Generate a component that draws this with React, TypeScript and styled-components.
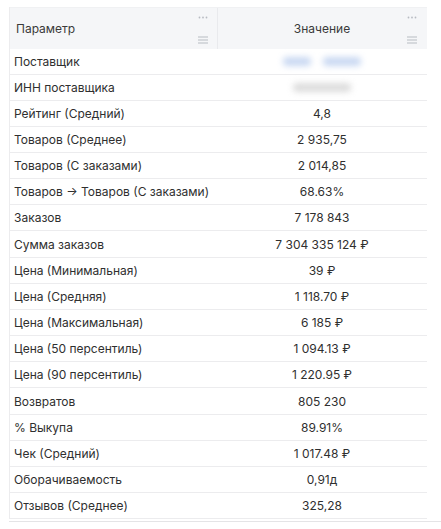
import React from 'react';
import styled, { createGlobalStyle } from 'styled-components';

const GlobalStyle = createGlobalStyle`
  html, body {
    margin: 0;
    padding: 0;
    background: #ffffff;
  }
  body {
    font-family: Inter, "Noto Sans", "Liberation Sans", sans-serif;
    color: #2b2b2b;
  }
`;

const Page = styled.div`
  width: 441px;
  height: 529px;
  padding-top: 7px;
  box-sizing: border-box;
  overflow: hidden;
`;

const Table = styled.div`
  margin-left: 9px;
  width: 417px;
  border-left: 1px solid #ececee;
`;

const HeaderRow = styled.div`
  display: grid;
  grid-template-columns: 208px 208px;
  height: 42px;
  background: #f5f6f8;
  border-top: 1px solid #f0f1f3;
  box-sizing: border-box;
`;

const HeaderCell = styled.div<{ $center?: boolean; $divider?: boolean }>`
  position: relative;
  display: flex;
  align-items: center;
  justify-content: ${p => (p.$center ? 'center' : 'flex-start')};
  padding-left: ${p => (p.$center ? '0' : '6px')};
  font-size: 12px;
  color: #3a3a3a;
  border-right: ${p => (p.$divider ? '1px solid #e9eaed' : 'none')};
`;

const HeaderTools = styled.div`
  position: absolute;
  right: 9px;
  top: 0;
  bottom: 0;
  display: flex;
  flex-direction: column;
  justify-content: space-between;
  align-items: center;
  padding: 8px 0 5px;
`;

const Row = styled.div<{ $tall?: boolean }>`
  display: grid;
  grid-template-columns: 208px 208px;
  height: ${p => (p.$tall ? '27px' : '26px')};
  border-bottom: 1px solid #ececee;
  box-sizing: border-box;
`;

const NameCell = styled.div`
  display: flex;
  align-items: center;
  padding-left: 4px;
  font-size: 12px;
  color: #2f2f2f;
  white-space: nowrap;
`;

const ValueCell = styled.div`
  display: flex;
  align-items: center;
  justify-content: center;
  gap: 12px;
  font-size: 12px;
  color: #2f2f2f;
  white-space: nowrap;
`;

/* hidden (blurred) value, drawn as a soft blob */
const Blob = styled.span<{ $tone: 'blue' | 'gray'; $w: number }>`
  display: inline-block;
  width: ${p => p.$w}px;
  height: 9px;
  border-radius: 4px;
  background: ${p => (p.$tone === 'blue' ? '#c9d8f2' : '#dcdcdc')};
  filter: blur(3px);
`;

const BottomLine = styled.div`
  margin-top: 2px;
  margin-left: 9px;
  height: 1px;
  background: #e4e4e6;
`;

const Dots = () => (
  <svg width="10" height="3" viewBox="0 0 10 3">
    <circle cx="1.5" cy="1.5" r="0.9" fill="#b8bbc2" />
    <circle cx="5" cy="1.5" r="0.9" fill="#b8bbc2" />
    <circle cx="8.5" cy="1.5" r="0.9" fill="#b8bbc2" />
  </svg>
);

const Lines = () => (
  <svg width="10" height="8" viewBox="0 0 10 8">
    <rect x="0" y="0.5" width="10" height="1" fill="#b8bbc2" />
    <rect x="0" y="3.5" width="10" height="1" fill="#b8bbc2" />
    <rect x="0" y="6.5" width="10" height="1" fill="#b8bbc2" />
  </svg>
);

const rows: [string, string][] = [
  ['Рейтинг (Средний)', '4,8'],
  ['Товаров (Среднее)', '2 935,75'],
  ['Товаров (С заказами)', '2 014,85'],
  ['Товаров → Товаров (С заказами)', '68.63%'],
  ['Заказов', '7 178 843'],
  ['Сумма заказов', '7 304 335 124 ₽'],
  ['Цена (Минимальная)', '39 ₽'],
  ['Цена (Средняя)', '1 118.70 ₽'],
  ['Цена (Максимальная)', '6 185 ₽'],
  ['Цена (50 персентиль)', '1 094.13 ₽'],
  ['Цена (90 персентиль)', '1 220.95 ₽'],
  ['Возвратов', '805 230'],
  ['% Выкупа', '89.91%'],
  ['Чек (Средний)', '1 017.48 ₽'],
  ['Оборачиваемость', '0,91д'],
  ['Отзывов (Среднее)', '325,28'],
];

export default function App() {
  return (
    <Page>
      <GlobalStyle />
      <Table>
        <HeaderRow>
          <HeaderCell $divider>
            Параметр
            <HeaderTools>
              <Dots />
              <Lines />
            </HeaderTools>
          </HeaderCell>
          <HeaderCell $center>
            Значение
            <HeaderTools>
              <Dots />
              <Lines />
            </HeaderTools>
          </HeaderCell>
        </HeaderRow>
        <Row>
          <NameCell>Поставщик</NameCell>
          <ValueCell>
            <Blob $tone="blue" $w={28} />
            <Blob $tone="blue" $w={38} />
          </ValueCell>
        </Row>
        <Row>
          <NameCell>ИНН поставщика</NameCell>
          <ValueCell>
            <Blob $tone="gray" $w={58} />
          </ValueCell>
        </Row>
        {rows.map(([name, value], i) => (
          <Row key={name} $tall={i === 5 || i === 11}>
            <NameCell>{name}</NameCell>
            <ValueCell>{value}</ValueCell>
          </Row>
        ))}
      </Table>
      <BottomLine />
    </Page>
  );
}
